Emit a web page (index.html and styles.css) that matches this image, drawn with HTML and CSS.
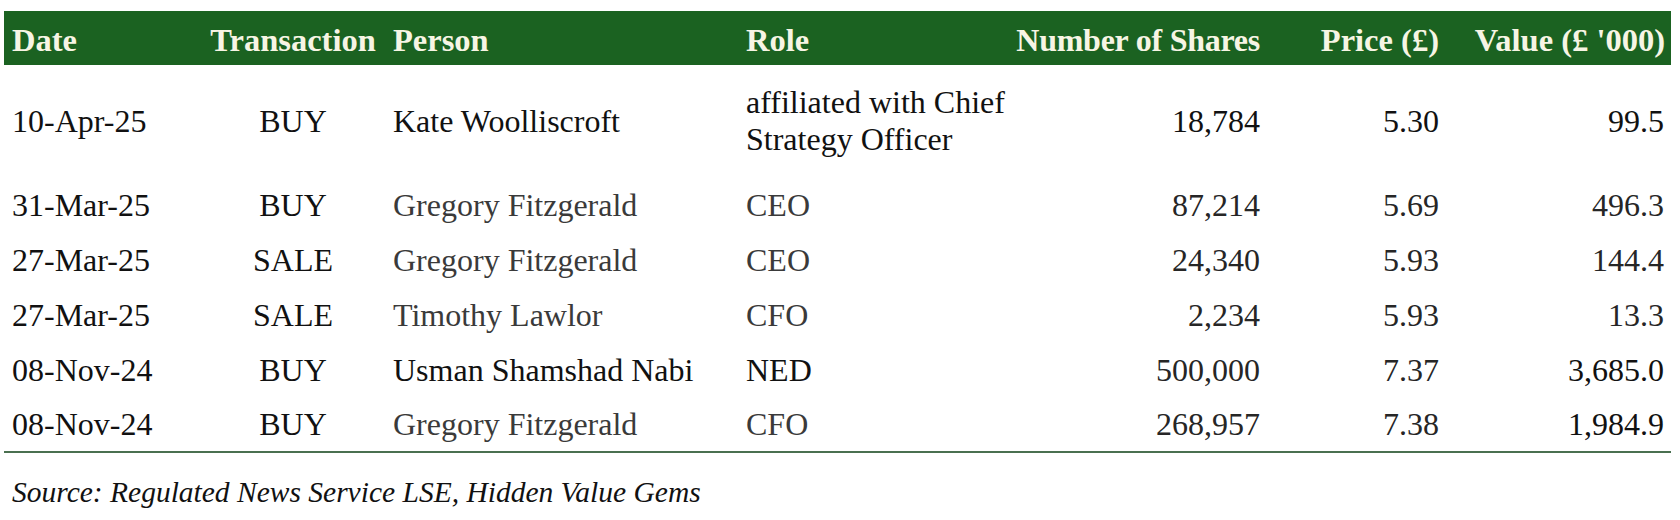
FILE: index.html
```html
<!DOCTYPE html>
<html lang="en">
<head>
<meta charset="utf-8">
<title>Director dealings</title>
<link rel="stylesheet" href="styles.css">
</head>
<body>
<div class="page">
  <table class="deals">
    <colgroup>
      <col class="c-date">
      <col class="c-tx">
      <col class="c-person">
      <col class="c-role">
      <col class="c-shares">
      <col class="c-price">
      <col class="c-value">
    </colgroup>
    <thead>
      <tr>
        <th class="left">Date</th>
        <th class="center">Transaction</th>
        <th class="left">Person</th>
        <th class="left">Role</th>
        <th class="right shares">Number of Shares</th>
        <th class="right price">Price (£)</th>
        <th class="right">Value (£ '000)</th>
      </tr>
    </thead>
    <tbody>
      <tr class="tall">
        <td class="left">10-Apr-25</td>
        <td class="center">BUY</td>
        <td class="left">Kate Woolliscroft</td>
        <td class="left role-wrap">affiliated with Chief Strategy Officer</td>
        <td class="right shares">18,784</td>
        <td class="right price">5.30</td>
        <td class="right">99.5</td>
      </tr>
      <tr>
        <td class="left">31-Mar-25</td>
        <td class="center">BUY</td>
        <td class="left muted">Gregory Fitzgerald</td>
        <td class="left muted">CEO</td>
        <td class="right num shares">87,214</td>
        <td class="right num price">5.69</td>
        <td class="right num">496.3</td>
      </tr>
      <tr>
        <td class="left">27-Mar-25</td>
        <td class="center">SALE</td>
        <td class="left muted">Gregory Fitzgerald</td>
        <td class="left muted">CEO</td>
        <td class="right num shares">24,340</td>
        <td class="right num price">5.93</td>
        <td class="right num">144.4</td>
      </tr>
      <tr>
        <td class="left">27-Mar-25</td>
        <td class="center">SALE</td>
        <td class="left muted">Timothy Lawlor</td>
        <td class="left muted">CFO</td>
        <td class="right num shares">2,234</td>
        <td class="right num price">5.93</td>
        <td class="right num">13.3</td>
      </tr>
      <tr>
        <td class="left">08-Nov-24</td>
        <td class="center">BUY</td>
        <td class="left">Usman Shamshad Nabi</td>
        <td class="left">NED</td>
        <td class="right num shares">500,000</td>
        <td class="right num price">7.37</td>
        <td class="right">3,685.0</td>
      </tr>
      <tr class="last">
        <td class="left">08-Nov-24</td>
        <td class="center">BUY</td>
        <td class="left muted">Gregory Fitzgerald</td>
        <td class="left muted">CFO</td>
        <td class="right num shares">268,957</td>
        <td class="right num price">7.38</td>
        <td class="right">1,984.9</td>
      </tr>
    </tbody>
  </table>
  <p class="source">Source: Regulated News Service LSE, Hidden Value Gems</p>
</div>
</body>
</html>
```

FILE: styles.css
```css
html, body {
  margin: 0;
  padding: 0;
  background: #ffffff;
}

body {
  font-family: "Liberation Serif", "Times New Roman", serif;
  color: #111111;
}

.page {
  padding: 11px 9px 0 4px;
}

.deals {
  width: 1667px;
  border-collapse: collapse;
  table-layout: fixed;
  font-size: 32px;
}

.c-date { width: 196px; }
.c-tx { width: 185px; }
.c-person { width: 353px; }
.c-role { width: 276px; }
.c-shares { width: 256px; }
.c-price { width: 179px; }
.c-value { width: 222px; }

.deals th {
  background: #1b6221;
  color: #f7f5e4;
  font-weight: bold;
  height: 54px;
  padding: 5px 7px 0 8px;
  white-space: nowrap;
  box-sizing: border-box;
  font-size: 32.5px;
}

.deals th.right {
  padding-right: 6px;
}

.deals th.shares {
  padding-left: 0;
  padding-right: 10px;
  font-size: 32px;
  letter-spacing: -0.25px;
}

.deals td {
  height: 55px;
  padding: 0 7px 0 8px;
  box-sizing: border-box;
  vertical-align: middle;
  white-space: nowrap;
  line-height: 37px;
}

.deals td.shares {
  padding-right: 10px;
}

.deals th.price,
.deals td.price {
  padding-right: 10px;
}

.deals tr.tall td {
  height: 113px;
}

.deals td.role-wrap {
  white-space: normal;
  padding-right: 2px;
  padding-bottom: 2px;
}

.deals tr.last td {
  border-bottom: 2px solid #4a7050;
  height: 54px;
}

.left { text-align: left; }
.center { text-align: center; }
.right { text-align: right; }

.muted { color: #3a3a3a; }
.num { color: #262626; }

.source {
  margin: 23px 0 0 8px;
  font-size: 29.5px;
  font-style: italic;
  color: #111111;
}
```
